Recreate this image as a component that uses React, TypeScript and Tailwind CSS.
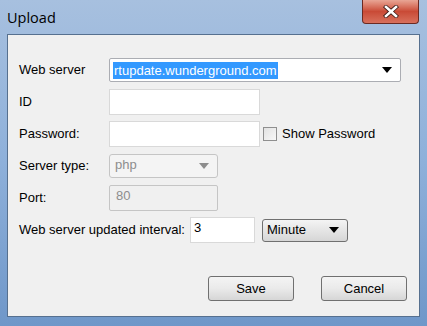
export default function App() {

const font = { fontFamily: '"Liberation Sans", Arial, sans-serif' }

return (

<div className="w-[427px] h-[326px] flex flex-col bg-gradient-to-b from-[#a7c0df] via-[#8eb0da] to-[#6f97c9] overflow-hidden" style={font}>

{/* TITLE BAR */}

<div className="h-[34px] flex items-start shrink-0">

<div className="pl-[7px] pt-[7px] text-[14.5px] text-black" style={{ fontFamily: '"Open Sans", "Noto Sans", sans-serif' }}>
Upload
</div>

<div className="ml-auto mr-[8px] w-[57px] h-[24px] rounded-b-[4px] border border-[#6b2a22] border-t-0 bg-gradient-to-b from-[#e8a595] via-[#c94a36] to-[#d8705c] flex items-center justify-center">
<svg width="16" height="13" viewBox="0 0 16 13">
<path d="M3 2 L13 11 M13 2 L3 11" stroke="#3a1a16" strokeWidth="4.2" strokeLinecap="square" />
<path d="M3 2 L13 11 M13 2 L3 11" stroke="#ffffff" strokeWidth="2.6" strokeLinecap="square" />
</svg>
</div>

</div>


{/* CONTENT */}

<div className="mx-[7px] mb-[9px] flex-1 bg-[#f0f0f0] border border-[#56708f] flex flex-col pt-[19px] text-[13px] text-black">


{/* WEB SERVER */}

<div className="h-[32px] flex items-center">
<div className="w-[101px] pl-[11px]">Web server</div>
<div className="w-[292px] h-[24px] bg-white border border-[#abadb3] rounded-[2px] flex items-center pl-[3px] pr-[8px]">
<span className="bg-[#3399ff] text-white px-[1px] text-[13px] leading-[17px]">rtupdate.wunderground.com</span>
<svg className="ml-auto" width="10" height="6" viewBox="0 0 10 6"><path d="M0 0 H10 L5 6 Z" fill="#000" /></svg>
</div>
</div>


{/* ID */}

<div className="h-[32px] flex items-center">
<div className="w-[101px] pl-[11px]">ID</div>
<div className="w-[151px] h-[26px] bg-white border border-[#d9d9d9]"></div>
</div>


{/* PASSWORD */}

<div className="h-[32px] flex items-center">
<div className="w-[101px] pl-[11px]">Password:</div>
<div className="w-[151px] h-[26px] bg-white border border-[#d9d9d9]"></div>
<div className="ml-[3px] w-[14px] h-[14px] border border-[#8f8f8f] bg-gradient-to-br from-[#e2e2e2] to-[#f8f8f8]"></div>
<div className="ml-[5px]">Show Password</div>
</div>


{/* SERVER TYPE */}

<div className="h-[32px] flex items-center">
<div className="w-[101px] pl-[11px]">Server type:</div>
<div className="w-[109px] h-[24px] bg-[#f4f4f4] border border-[#c5c5c5] rounded-[3px] flex items-center pl-[5px] pr-[8px] pb-[3px] text-[#8d8d8d]">
<span>php</span>
<svg className="ml-auto mt-[3px]" width="10" height="6" viewBox="0 0 10 6"><path d="M0 0 H10 L5 6 Z" fill="#8d8d8d" /></svg>
</div>
</div>


{/* PORT */}

<div className="h-[32px] flex items-center">
<div className="w-[101px] pl-[11px]">Port:</div>
<div className="w-[109px] h-[26px] bg-[#f0f0f0] border border-[#c5c5c5] rounded-[2px] flex items-center pl-[6px] pb-[5px] text-[#8d8d8d]">80</div>
</div>


{/* INTERVAL */}

<div className="h-[32px] flex items-center">
<div className="w-[182px] pl-[11px] whitespace-nowrap">Web server updated interval:</div>
<div className="w-[65px] h-[26px] bg-white border border-[#d9d9d9] flex items-center pl-[3px] pb-[5px]">3</div>
<div className="ml-[7px] w-[86px] h-[23px] border border-[#707070] rounded-[3px] bg-gradient-to-b from-[#f4f4f4] to-[#d6d6d6] flex items-center pl-[4px] pr-[8px]">
<span>Minute</span>
<svg className="ml-auto" width="10" height="6" viewBox="0 0 10 6"><path d="M0 0 H10 L5 6 Z" fill="#000" /></svg>
</div>
</div>


{/* BUTTONS */}

<div className="flex mt-[30px] pl-[200px] gap-[27px]">
<button className="w-[86px] h-[25px] border border-[#707070] rounded-[3px] bg-gradient-to-b from-[#f4f4f4] via-[#eaeaea] to-[#d6d6d6] text-[13px]">
Save
</button>
<button className="w-[86px] h-[25px] border border-[#707070] rounded-[3px] bg-gradient-to-b from-[#f4f4f4] via-[#eaeaea] to-[#d6d6d6] text-[13px]">
Cancel
</button>
</div>


</div>

</div>

)

}
